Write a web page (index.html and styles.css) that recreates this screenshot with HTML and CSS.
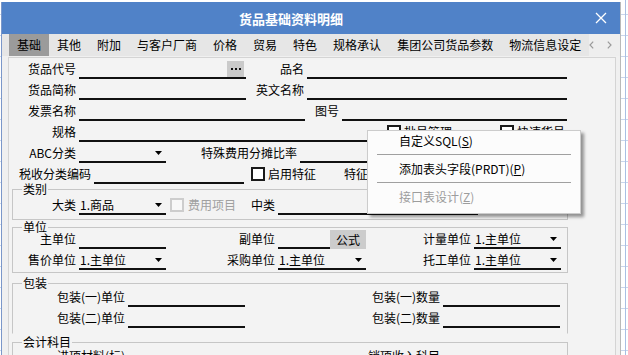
FILE: index.html
```html
<!DOCTYPE html>
<html lang="zh-CN">
<head>
<meta charset="utf-8">
<title>货品基础资料明细</title>
<link rel="stylesheet" href="styles.css">
</head>
<body>
<div class="dialog">
  <div class="titlebar">
    <div class="title">货品基础资料明细</div>
    <svg class="close" width="12" height="12" viewBox="0 0 12 12"><path d="M1 1L11 11M11 1L1 11" stroke="#fff" stroke-width="1.3" fill="none"/></svg>
  </div>
  <div class="tabs">
    <span class="tab active">基础</span>
    <span class="tab">其他</span>
    <span class="tab">附加</span>
    <span class="tab">与客户厂商</span>
    <span class="tab">价格</span>
    <span class="tab">贸易</span>
    <span class="tab">特色</span>
    <span class="tab">规格承认</span>
    <span class="tab">集团公司货品参数</span>
    <span class="tab">物流信息设定</span>
    <div class="tab-arrows">
      <svg width="5" height="8" viewBox="0 0 5 8"><path d="M4.2 0.6L1 4L4.2 7.4" fill="none" stroke="#9a9a9a" stroke-width="1.2"/></svg>
      <svg width="5" height="8" viewBox="0 0 5 8"><path d="M0.8 0.6L4 4L0.8 7.4" fill="none" stroke="#9a9a9a" stroke-width="1.2"/></svg>
    </div>
  </div>
  <div class="panel">
    <div class="row">
      <span class="lbl lw67">货品代号</span>
      <div class="fld fw167"><span class="dots"><svg width="17" height="16" viewBox="0 0 17 16"><rect x="4" y="7" width="2" height="2" fill="#111"/><rect x="8" y="7" width="2" height="2" fill="#111"/><rect x="12" y="7" width="2" height="2" fill="#111"/></svg></span></div>
      <span class="lbl lw58">品名</span>
      <div class="fld fw260"></div>
    </div>
    <div class="row">
      <span class="lbl lw67">货品简称</span>
      <div class="fld fw167"></div>
      <span class="lbl lw58">英文名称</span>
      <div class="fld fw260"></div>
    </div>
    <div class="row">
      <span class="lbl lw67">发票名称</span>
      <div class="fld fw226"></div>
      <span class="lbl lw34">图号</span>
      <div class="fld fw225"></div>
    </div>
    <div class="row">
      <span class="lbl lw67">规格</span>
      <div class="fld fw301"></div>
      <span class="chk c-lot"><span class="box"></span><span class="txt">批号管理</span></span>
      <span class="chk"><span class="box"></span><span class="txt">快速货号</span></span>
    </div>
    <div class="row">
      <span class="lbl lw67">ABC分类</span>
      <div class="fld fw87"><svg class="arr" width="7" height="4" viewBox="0 0 7 4"><polygon points="0,0 7,0 3.5,4" fill="#000"/></svg></div>
      <span class="lbl lw131">特殊费用分摊比率</span>
      <div class="fld fw180"></div>
    </div>
    <div class="row">
      <span class="lbl lw82">税收分类编码</span>
      <div class="fld fw150"></div>
      <span class="chk c-feat"><span class="box"></span><span class="txt">启用特征</span></span>
      <span class="lbl">特征码</span>
      <div class="fld fw150"></div>
    </div>

    <fieldset class="grp g-cat">
      <legend>类别</legend>
      <div class="row">
        <span class="lbl lw63">大类</span>
        <div class="fld fw87"><span class="val">1.商品</span><svg class="arr" width="7" height="4" viewBox="0 0 7 4"><polygon points="0,0 7,0 3.5,4" fill="#000"/></svg></div>
        <span class="chk dis c-fee"><span class="box"></span><span class="txt">费用项目</span></span>
        <span class="lbl lw24">中类</span>
        <div class="fld fw200"></div>
      </div>
    </fieldset>

    <fieldset class="grp g-unit">
      <legend>单位</legend>
      <div class="row h17">
        <span class="lbl lw63">主单位</span>
        <div class="fld fw87"></div>
        <span class="lbl lw109">副单位</span>
        <div class="fld fw52"></div>
        <span class="btn">公式</span>
        <span class="lbl lw105">计量单位</span>
        <div class="fld fw87"><span class="val">1.主单位</span><svg class="arr" width="7" height="4" viewBox="0 0 7 4"><polygon points="0,0 7,0 3.5,4" fill="#000"/></svg></div>
      </div>
      <div class="row">
        <span class="lbl lw63">售价单位</span>
        <div class="fld fw87"><span class="val">1.主单位</span><svg class="arr" width="7" height="4" viewBox="0 0 7 4"><polygon points="0,0 7,0 3.5,4" fill="#000"/></svg></div>
        <span class="lbl lw109">采购单位</span>
        <div class="fld fw88"><span class="val">1.主单位</span><svg class="arr" width="7" height="4" viewBox="0 0 7 4"><polygon points="0,0 7,0 3.5,4" fill="#000"/></svg></div>
        <span class="lbl lw105">托工单位</span>
        <div class="fld fw87"><span class="val">1.主单位</span><svg class="arr" width="7" height="4" viewBox="0 0 7 4"><polygon points="0,0 7,0 3.5,4" fill="#000"/></svg></div>
      </div>
    </fieldset>

    <fieldset class="grp g-pack">
      <legend>包装</legend>
      <div class="row h19">
        <span class="lbl lw112">包装(一)单位</span>
        <div class="fld fw117"></div>
        <span class="lbl lw195">包装(一)数量</span>
        <div class="fld fw117"></div>
      </div>
      <div class="row">
        <span class="lbl lw112">包装(二)单位</span>
        <div class="fld fw117"></div>
        <span class="lbl lw195">包装(二)数量</span>
        <div class="fld fw117"></div>
      </div>
    </fieldset>

    <fieldset class="grp g-acct">
      <legend>会计科目</legend>
      <div class="row h19">
        <span class="lbl lw112">进项材料(标)</span>
        <div class="fld fw117"></div>
        <span class="lbl lw195">销项收入科目</span>
        <div class="fld fw117"></div>
      </div>
    </fieldset>
  </div>
</div>

<div class="menu">
  <div class="mi">自定义SQL(<u>S</u>)</div>
  <div class="sep"></div>
  <div class="mi">添加表头字段(PRDT)(<u>P</u>)</div>
  <div class="sep"></div>
  <div class="mi dis">接口表设计(<u>Z</u>)</div>
</div>
</body>
</html>
```

FILE: styles.css
```css
* { box-sizing: border-box; }

html, body {
  margin: 0;
  height: 355px;
  overflow: hidden;
}

body {
  position: relative;
  padding: 2px 0 0 1px;
  font-family: "Noto Sans CJK SC", "Microsoft YaHei", sans-serif;
  font-size: 12px;
  color: #000;
  background-color: #fff;
  background-image:
    linear-gradient(90deg, transparent 625px, #a9bfe3 625px, #a9bfe3 626px, transparent 626px),
    repeating-linear-gradient(180deg, transparent 0, transparent 14px, #c9d6ec 14px, #c9d6ec 15px, transparent 15px, transparent 21px);
}

.dialog {
  width: 620px;
  height: 380px;
  background: #f0f0f0;
  border-left: 1px solid #7b97c9;
  border-right: 1px solid #b9b9b9;
}

/* title bar */
.titlebar {
  height: 32px;
  background: #5082c8;
  display: flex;
  align-items: center;
  color: #fff;
}
.title {
  width: 578px;
  text-align: center;
  font-weight: bold;
  font-size: 13px;
  line-height: 16px;
  padding-top: 1px;
}
.close {
  margin-left: 15px;
  flex: none;
}

/* tabs */
.tabs {
  height: 22px;
  background: #e6e6e6;
  display: flex;
  align-items: stretch;
}
.tab {
  flex: none;
  padding: 0 8px;
  line-height: 22px;
  white-space: nowrap;
}
.tab:first-child { margin-left: 7px; }
.tab.active { background: #9b9b9b; }
.tab-arrows {
  flex: none;
  width: 31px;
  display: flex;
  align-items: center;
  gap: 13px;
  padding-left: 0;
  background: #eeeeee;
}

/* panel */
.panel {
  margin: 1px 4px 0 6px;
  border: 1px solid #d4d4d4;
  background: #f3f3f3;
  height: 330px;
}

.row {
  display: flex;
  align-items: flex-end;
  height: 21px;
}
.row.h17 { height: 17px; }
.row.h19 { height: 19px; }

.lbl {
  flex: none;
  text-align: right;
  line-height: 16px;
  margin-bottom: 2px;
  white-space: nowrap;
}
.lw24 { width: 24px; }
.lw34 { width: 34px; }
.lw58 { width: 58px; }
.lw63 { width: 63px; }
.lw67 { width: 67px; }
.lw82 { width: 82px; }
.lw105 { width: 105px; }
.lw109 { width: 109px; }
.lw112 { width: 112px; }
.lw131 { width: 131px; }
.lw195 { width: 195px; }

.fld {
  flex: none;
  height: 19px;
  margin-left: 3px;
  border-bottom: 2px solid #111;
  display: flex;
  align-items: center;
  line-height: 16px;
  white-space: nowrap;
}
.fw52 { width: 52px; }
.fw87 { width: 87px; }
.fw88 { width: 88px; }
.fw117 { width: 117px; }
.fw150 { width: 150px; }
.fw167 { width: 167px; }
.fw180 { width: 180px; }
.fw200 { width: 200px; }
.fw225 { width: 225px; }
.fw226 { width: 226px; }
.fw260 { width: 260px; }
.fw301 { width: 301px; }

.val { padding-left: 1px; }
.arr {
  flex: none;
  margin-left: auto;
  margin-right: 4px;
}

.dots {
  margin-left: auto;
  margin-right: 2px;
  align-self: flex-end;
  width: 17px;
  height: 16px;
  background: #cacaca;
  display: flex;
}

.btn {
  flex: none;
  width: 36px;
  height: 19px;
  line-height: 19px;
  text-align: center;
  background: #cccccc;
}

/* checkboxes */
.chk {
  flex: none;
  display: flex;
  align-items: center;
  height: 14px;
  margin-bottom: 3px;
  white-space: nowrap;
}
.chk .box {
  flex: none;
  width: 14px;
  height: 14px;
  border: 2px solid #1a1a1a;
  background: #fff;
}
.chk .txt {
  margin-left: 3px;
  line-height: 16px;
}
.chk.dis .box { border-color: #cdcdcd; background: #f8f8f8; }
.chk.dis .txt { color: #a0a0a0; margin-left: 4px; }
.c-lot { margin-left: 7px; width: 113px; }
.c-feat { margin-left: 7px; width: 93px; }
.c-fee { margin-left: 4px; width: 81px; }

/* group boxes */
.grp {
  margin: 0 0 0 3px;
  padding: 0;
  width: 556px;
  min-inline-size: 0;
  border: 1px solid #c6c6c6;
}
.grp legend {
  padding: 0 1px;
  margin-left: 9px;
  line-height: 10px;
  font-size: 12px;
}
.g-cat { padding-bottom: 4px; }
.g-unit { margin-top: 2px; padding-bottom: 2px; }
.g-pack { margin-top: 5px; padding-bottom: 5px; border-bottom-color: #f3f3f3; }
.g-acct { margin-top: 3px; }

/* context menu */
.menu {
  position: absolute;
  left: 367px;
  top: 130px;
  width: 214px;
  padding: 0 0 6px;
  background: #fcfcfc;
  border: 1px solid #cccccc;
  box-shadow: 3px 3px 3px rgba(0, 0, 0, 0.4);
}
.mi {
  height: 20px;
  line-height: 20px;
  padding-left: 31px;
  white-space: nowrap;
}
.mi.dis { color: #9d9d9d; }
.sep {
  height: 1px;
  margin: 3px 9px 4px;
  background: #a0a0a0;
}
```
